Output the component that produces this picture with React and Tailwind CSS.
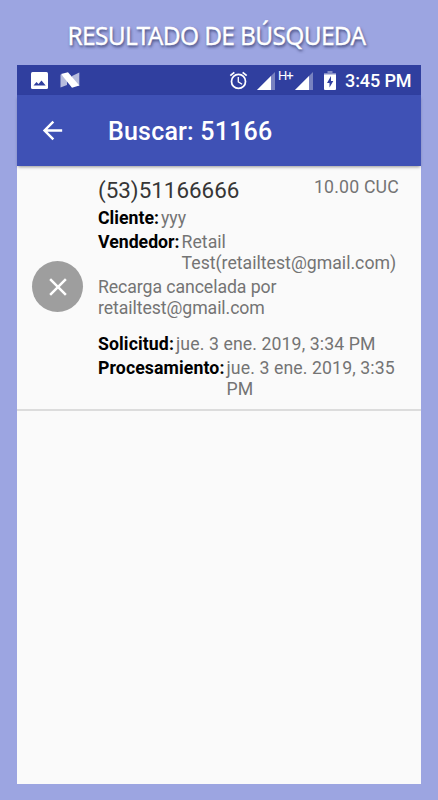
import React from "react";

const Field = ({ label, children, className = "" }) => (
  <div className={`flex gap-[2px] leading-[20.4px] whitespace-nowrap ${className}`}>
    <span className="font-bold text-black">{label}</span>
    <span>{children}</span>
  </div>
);

const SignalIcon = () => (
  <svg className="h-[18px] w-[18px] shrink-0" viewBox="0 0 18 18" fill="#fff">
    <path d="M0 18 18 0v18z" opacity=".35" />
    <path d="M0 18 14 4v14z" />
  </svg>
);

const StatusBar = () => (
  <div className="flex h-[30px] items-center bg-[#303f9f] text-white">
    <svg className="ml-[14px] h-[17px] w-[17px]" viewBox="0 0 17 17">
      <rect width="17" height="17" rx="1.5" fill="#fff" />
      <path d="M2.5 13.5 5.5 10l2 2 3-3.6 4.2 5.1z" fill="#303f9f" />
    </svg>
    <svg className="ml-[12px] h-[16px] w-[20px]" viewBox="0 0 20 16" fill="#fff">
      <path d="M.5 2.5 7 5v8L.5 15.5z" opacity=".65" />
      <path d="M12 4 19.3.5V14L12 10z" opacity=".65" />
      <path d="M1 2 8 .3 19.3 13.6 12 15.7z" />
    </svg>
    <svg className="ml-[148px] h-[21px] w-[21px]" viewBox="0 0 24 24" fill="#fff">
      <path d="m22 5.72-4.6-3.86-1.29 1.53 4.6 3.86L22 5.72zM7.88 3.39 6.6 1.86 2 5.71l1.29 1.53 4.59-3.85zM12.5 8H11v6l4.75 2.85.75-1.23-4-2.37V8zM12 4a9 9 0 1 0 0 18 9 9 0 0 0 0-18zm0 16a7 7 0 1 1 0-14 7 7 0 0 1 0 14z" />
    </svg>
    <div className="ml-[8px] flex items-end">
      <SignalIcon />
      <span className="mb-[8px] ml-[3px] w-[14px] text-[13px] leading-[12px] tracking-[-1px]">H+</span>
      <span className="ml-[3px]"><SignalIcon /></span>
    </div>
    <svg className="ml-[11px] h-[19px] w-[12px]" viewBox="0 0 12 19">
      <path d="M3.5 0h5v2H12v3H0V2h3.5z" fill="#fff" opacity=".4" />
      <path d="M0 3.5h12V18a1 1 0 0 1-1 1H1a1 1 0 0 1-1-1z" fill="#fff" />
      <path d="M7 5 3 12h2.5v4.5L9.300 10H7z" fill="#303f9f" />
    </svg>
    <span className="ml-[9px] text-[18px] font-medium tracking-[-0.1px] whitespace-nowrap">3:45 PM</span>
  </div>
);

const App = () => {
  return (
    <div className="h-[800px] w-[438px] overflow-hidden bg-[#9ca5e1] px-[17px] font-['Roboto',sans-serif]">
      {/* Caption */}
      <h1 className="flex h-[65px] items-center justify-center pt-[7px] pr-[5px] font-['Noto_Sans','Open_Sans',sans-serif] text-[24.5px] tracking-[-0.68px] whitespace-nowrap text-white [-webkit-text-stroke:0.3px_white] [text-shadow:1px_2px_3px_rgba(30,35,80,0.75)]">
        RESULTADO DE BÚSQUEDA
      </h1>

      {/* Phone screen */}
      <div className="flex h-[719px] flex-col bg-[#fafafa]">
        <StatusBar />
        <header className="flex h-[71px] shrink-0 items-center bg-[#3f51b5] text-white shadow-[0_2px_3px_-1px_rgba(0,0,0,0.4)]">
          <svg className="ml-[21px] h-[29px] w-[29px]" viewBox="0 0 24 24" fill="#fff">
            <path d="M20 11H7.83l5.59-5.59L12 4l-8 8 8 8 1.41-1.41L7.83 13H20v-2z" />
          </svg>
          <h2 className="ml-[41px] pt-[2px] text-[25px] font-medium tracking-[0.2px] whitespace-nowrap">Buscar: 51166</h2>
        </header>

        {/* Result */}
        <div className="flex h-[245px] shrink-0 items-center border-b-2 border-[#dcdcdc] text-[17.7px] text-[#747474]">
          <div className="mb-[2px] ml-[15px] flex h-[51px] w-[51px] shrink-0 items-center justify-center rounded-full bg-[#9e9e9e]">
            <svg className="h-[30px] w-[30px]" viewBox="0 0 24 24" fill="#fff">
              <path d="M19 6.41 17.59 5 12 10.59 6.41 5 5 6.41 10.59 12 5 17.59 6.41 19 12 13.41 17.59 19 19 17.59 13.41 12z" />
            </svg>
          </div>
          <div className="ml-[15px] w-[301px] self-start pt-[10px]">
            <div className="flex justify-between whitespace-nowrap">
              <span className="text-[22.4px] leading-[28px] text-[#363636]">(53)51166666</span>
              <span className="pt-[1px] leading-[21px] tracking-[0.2px]">10.00 CUC</span>
            </div>
            <div className="mt-[4px] flex flex-col gap-[4px]">
              <Field label="Cliente:">yyy</Field>
              <Field label="Vendedor:">
                Retail
                <br />
                Test(retailtest@gmail.com)
              </Field>
              <p className="leading-[20.4px] tracking-[-0.08px]">
                Recarga cancelada por
                <br />
                retailtest@gmail.com
              </p>
            </div>
            <div className="mt-[16px] flex flex-col gap-[4px]">
              <Field label="Solicitud:" className="tracking-[0.1px]">jue. 3 ene. 2019, 3:34 PM</Field>
              <Field label="Procesamiento:" className="tracking-[0.1px]">
                jue. 3 ene. 2019, 3:35
                <br />
                PM
              </Field>
            </div>
          </div>
        </div>
      </div>
    </div>
  );
};

export default App;
